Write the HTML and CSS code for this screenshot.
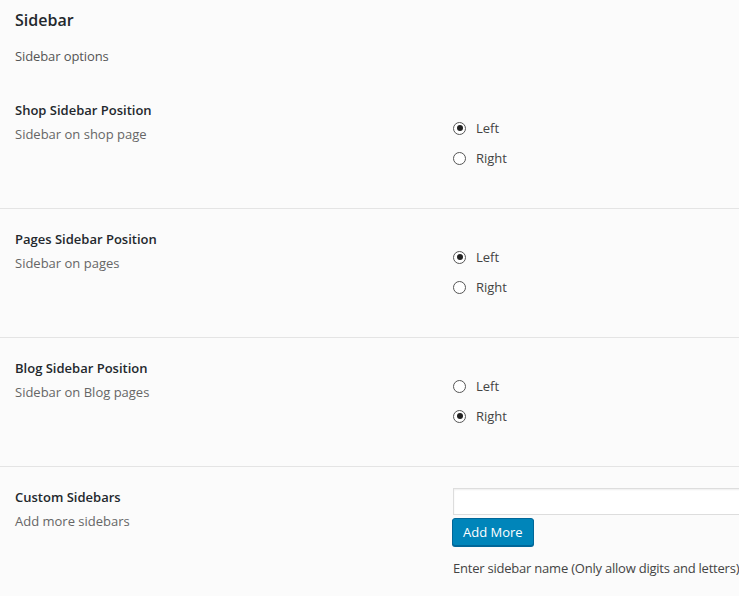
FILE: index.html
```html
<!DOCTYPE html>
<html>
<head>
<meta charset="utf-8">
<link rel="stylesheet" href="styles.css">
</head>
<body>
<div class="page">
  <div class="intro">
    <h2 class="title">Sidebar</h2>
    <p class="lead">Sidebar options</p>
  </div>

  <div class="row">
    <div class="label-col">
      <div class="label">Shop Sidebar Position</div>
      <div class="desc">Sidebar on shop page</div>
    </div>
    <div class="field-col radios">
      <label class="opt"><span class="radio checked"></span>Left</label>
      <label class="opt"><span class="radio"></span>Right</label>
    </div>
  </div>

  <div class="row">
    <div class="label-col">
      <div class="label">Pages Sidebar Position</div>
      <div class="desc">Sidebar on pages</div>
    </div>
    <div class="field-col radios">
      <label class="opt"><span class="radio checked"></span>Left</label>
      <label class="opt"><span class="radio"></span>Right</label>
    </div>
  </div>

  <div class="row">
    <div class="label-col">
      <div class="label">Blog Sidebar Position</div>
      <div class="desc">Sidebar on Blog pages</div>
    </div>
    <div class="field-col radios">
      <label class="opt"><span class="radio"></span>Left</label>
      <label class="opt"><span class="radio checked"></span>Right</label>
    </div>
  </div>

  <div class="row last">
    <div class="label-col">
      <div class="label">Custom Sidebars</div>
      <div class="desc">Add more sidebars</div>
    </div>
    <div class="field-col custom">
      <input class="text-input" type="text">
      <button class="btn">Add More</button>
      <div class="help">Enter sidebar name (Only allow digits and letters)</div>
    </div>
  </div>
</div>
</body>
</html>
```

FILE: styles.css
```css
html, body {
  margin: 0;
  padding: 0;
  background: #fbfbfb;
  font-family: "Open Sans", "Noto Sans", sans-serif;
  font-size: 13px;
  color: #444;
  overflow: hidden;
}

.page {
  width: 739px;
  overflow: hidden;
}

.intro {
  padding: 8px 15px 0 15px;
  height: 72px;
}

.title {
  margin: 0;
  font-size: 16px;
  font-weight: 600;
  line-height: 24px;
  color: #23282d;
}

.lead {
  margin: 14px 0 0 0;
  line-height: 20px;
  color: #555;
  letter-spacing: -0.1px;
}

.row {
  display: flex;
  height: 128px;
  border-bottom: 1px solid #e4e4e4;
  padding-left: 15px;
}

.row.last {
  border-bottom: none;
}

.label-col {
  width: 438px;
  flex: none;
  padding-top: 20px;
}

.label {
  font-weight: 600;
  line-height: 20px;
  color: #23282d;
}

.desc {
  margin-top: 4px;
  line-height: 20px;
  color: #666;
}

.field-col {
  flex: 1;
  white-space: nowrap;
}

.radios {
  padding-top: 38px;
  display: flex;
  flex-direction: column;
  gap: 10px;
}

.opt {
  display: flex;
  align-items: center;
  gap: 10px;
  line-height: 20px;
  color: #444;
}

.radio {
  width: 11px;
  height: 11px;
  border: 1px solid #555;
  border-radius: 50%;
  background: #fff;
  position: relative;
  box-sizing: content-box;
}

.radio.checked::after {
  content: "";
  position: absolute;
  left: 2.5px;
  top: 2.5px;
  width: 6px;
  height: 6px;
  border-radius: 50%;
  background: #222;
}

.custom {
  padding-top: 21px;
  display: flex;
  flex-direction: column;
  align-items: flex-start;
}

.text-input {
  width: 300px;
  height: 27px;
  box-sizing: border-box;
  margin: 0;
  border: 1px solid #ddd;
  background: #fff;
  box-shadow: inset 0 1px 2px rgba(0,0,0,0.07);
}

.btn {
  margin-top: 3px;
  margin-left: -1px;
  height: 28px;
  padding: 0 10px;
  background: #0085ba;
  border: 1px solid #006799;
  border-radius: 3px;
  box-shadow: 0 1px 0 #006799;
  color: #fff;
  font-family: inherit;
  font-size: 13px;
  line-height: 24px;
}

.help {
  margin-top: 12px;
  line-height: 20px;
  color: #444;
  letter-spacing: -0.22px;
}
```
